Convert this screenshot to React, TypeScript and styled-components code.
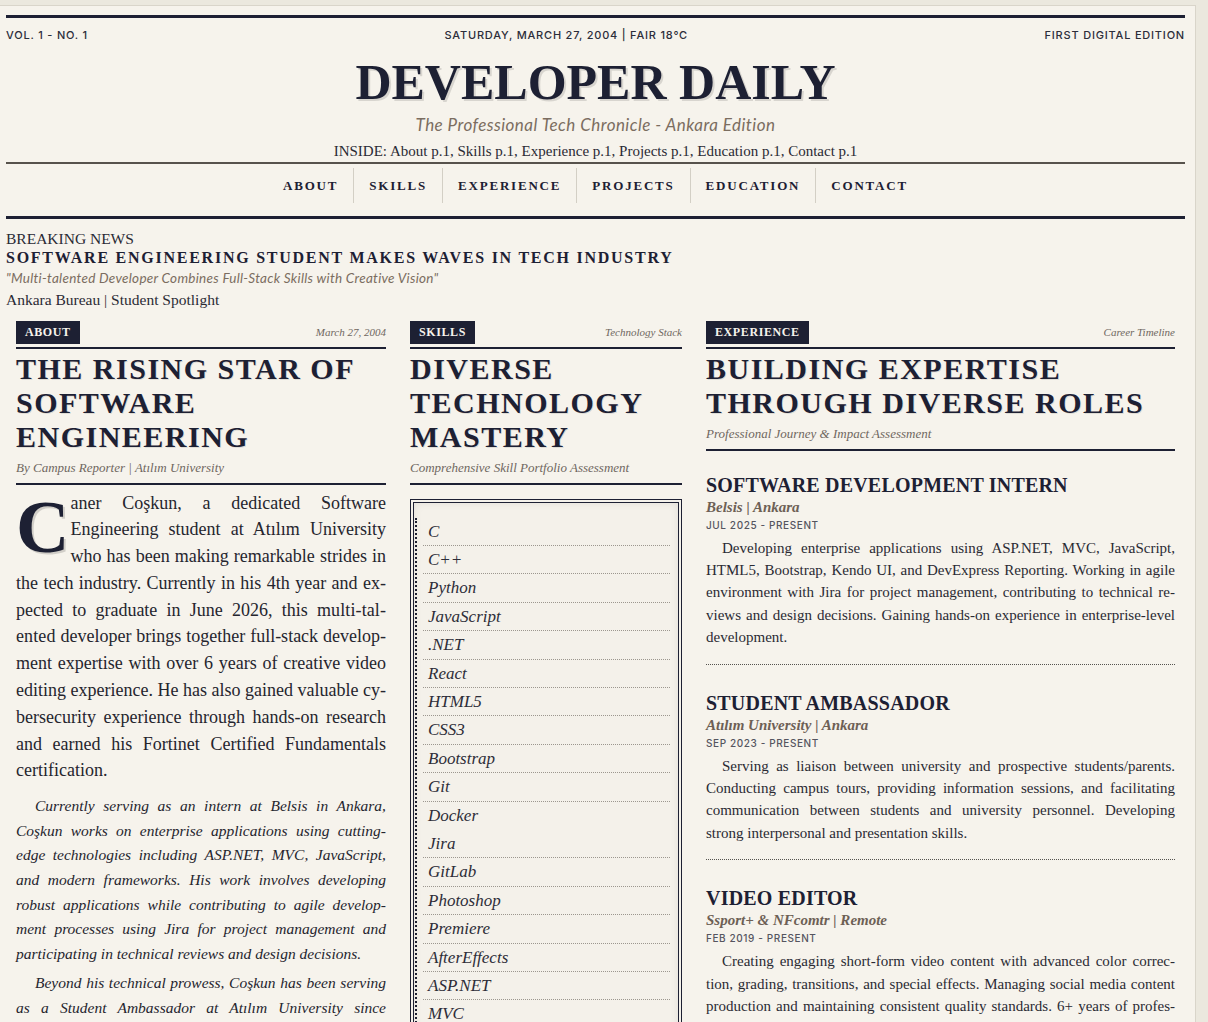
import React from 'react';
import styled, {createGlobalStyle} from 'styled-components';

const NAVY = '#1d2033';
const INK = '#2a2a34';
const MUTED = '#6f675f';
const BROWN = '#7b6d60';
const PAPER = '#f6f3ec';
const SERIF = `'Liberation Serif', 'Times New Roman', serif`;
const SANS = `Inter, 'Liberation Sans', sans-serif`;
const HUMAN = `Lato, 'Open Sans', sans-serif`;

const navItems = ['About', 'Skills', 'Experience', 'Projects', 'Education', 'Contact'];

const skills = [
  'C', 'C++', 'Python', 'JavaScript', '.NET', 'React', 'HTML5', 'CSS3', 'Bootstrap',
  'Git', 'Docker', 'Jira', 'GitLab', 'Photoshop', 'Premiere', 'AfterEffects', 'ASP.NET',
  'MVC', 'Kendo UI', 'DevExpress',
];

const jobs = [
  {
    title: 'Software Development Intern',
    place: 'Belsis | Ankara',
    dates: 'Jul 2025 - Present',
    text: 'Developing enterprise applications using ASP.NET, MVC, JavaScript, HTML5, Bootstrap, Kendo UI, and DevExpress Reporting. Working in agile environment with Jira for project management, contributing to technical re\u00ADviews and design decisions. Gaining hands-on experience in enterprise-level development.',
  },
  {
    title: 'Student Ambassador',
    place: 'Atılım University | Ankara',
    dates: 'Sep 2023 - Present',
    text: 'Serving as liaison between university and prospective students/parents. Conducting campus tours, providing information sessions, and facilitating communication between students and university personnel. Developing strong interpersonal and presentation skills.',
  },
  {
    title: 'Video Editor',
    place: 'Ssport+ & NFcomtr | Remote',
    dates: 'Feb 2019 - Present',
    text: 'Creating engaging short-form video content with advanced color correc\u00ADtion, grading, transitions, and special effects. Managing social media content production and maintaining consistent quality standards. 6+ years of profes\u00ADsional content creation experience.',
  },
];

const GlobalStyle = createGlobalStyle`
  html, body {
    margin: 0;
    background: #ebe8de;
  }
  body {
    font-family: ${SERIF};
    color: ${INK};
  }
`;

const Paper = styled.div`
  box-sizing: border-box;
  width: 1196px;
  min-height: 1100px;
  margin-top: 5px;
  padding: 9px 10px 40px 6px;
  background: ${PAPER};
  border-top: 1px solid #d9d5ca;
  border-right: 1px solid #d9d5ca;
`;

const Masthead = styled.header`
  border-top: 3px solid ${NAVY};
`;

const MetaRow = styled.div`
  display: flex;
  justify-content: space-between;
  margin-top: 9px;
  font-family: ${SANS};
  font-size: 11px;
  font-weight: 500;
  line-height: 16px;
  letter-spacing: 0.8px;
  color: #2c2d3a;
`;

const Title = styled.h1`
  margin: 12px 0 0;
  font-family: ${SERIF};
  font-size: 50px;
  font-weight: 700;
  line-height: 55px;
  text-align: center;
  color: ${NAVY};
  text-shadow: 2px 2px 0 rgba(0, 0, 0, 0.12);
`;

const Tagline = styled.div`
  margin-top: 5px;
  font-family: ${HUMAN};
  font-style: italic;
  font-size: 17px;
  line-height: 20px;
  letter-spacing: 0.45px;
  text-align: center;
  color: ${BROWN};
`;

const Inside = styled.div`
  margin-top: 6px;
  font-size: 15px;
  line-height: 20px;
  text-align: center;
  color: ${INK};
`;

const Nav = styled.nav`
  display: flex;
  justify-content: center;
  margin-top: 1px;
  padding: 4px 0 13px;
  border-top: 2px solid #57524c;
  border-bottom: 3px solid ${NAVY};
`;

const NavLink = styled.a`
  padding: 0 15px;
  font-size: 13px;
  font-weight: 700;
  line-height: 35px;
  letter-spacing: 1.8px;
  text-transform: uppercase;
  color: ${NAVY};
  text-decoration: none;
  & + & {
    border-left: 1px solid #d3cfc5;
  }
`;

const Breaking = styled.section`
  margin-top: 10px;
`;

const Kicker = styled.div`
  font-size: 15.5px;
  line-height: 19px;
  text-transform: uppercase;
`;

const Banner = styled.h2`
  margin: 0;
  font-size: 16px;
  font-weight: 700;
  line-height: 19px;
  letter-spacing: 1.75px;
  color: ${NAVY};
`;

const Quote = styled.div`
  margin-top: 1.5px;
  font-family: ${HUMAN};
  font-style: italic;
  font-size: 13.5px;
  line-height: 18px;
  letter-spacing: 0.28px;
  color: ${BROWN};
`;

const Dateline = styled.div`
  margin-top: 3px;
  font-size: 15.5px;
  line-height: 19px;
`;

const Columns = styled.main`
  display: grid;
  grid-template-columns: 370px 272px 469px;
  column-gap: 24px;
  align-items: start;
  margin-top: 12px;
  padding-left: 10px;
`;

const Column = styled.article``;

const SectionHead = styled.div`
  display: flex;
  justify-content: space-between;
  align-items: center;
  padding-bottom: 3px;
  border-bottom: 2px solid ${NAVY};
`;

const Label = styled.span`
  padding: 0 9px;
  background: ${NAVY};
  color: ${PAPER};
  font-size: 12px;
  font-weight: 700;
  line-height: 23px;
  letter-spacing: 0.6px;
`;

const Aside = styled.span`
  font-style: italic;
  font-size: 11px;
  color: ${MUTED};
`;

const Headline = styled.h2`
  margin: 3px 0 0;
  font-size: 30px;
  font-weight: 700;
  line-height: 34px;
  letter-spacing: 1.5px;
  color: ${NAVY};
  text-shadow: 1px 1px 0 rgba(0, 0, 0, 0.1);
`;

const Deck = styled.div`
  margin-top: 5px;
  padding-bottom: 6px;
  border-bottom: 2px solid ${NAVY};
  font-style: italic;
  font-size: 13px;
  line-height: 18px;
  color: ${MUTED};
`;

const Lead = styled.p`
  margin: 5px 0 10px;
  font-size: 18px;
  line-height: 26.8px;
  text-align: justify;
  color: #25252e;
`;

const Tracked = styled.span`
  letter-spacing: 0.12px;
`;

const DropCap = styled.span`
  float: left;
  padding-top: 9px;
  margin-right: 1px;
  font-size: 74px;
  font-weight: 700;
  line-height: 56px;
  color: ${NAVY};
  text-shadow: 2px 2px 0 rgba(0, 0, 0, 0.15);
`;

const Italic = styled.p`
  margin: 0 0 5px;
  font-style: italic;
  font-size: 15.5px;
  line-height: 24.6px;
  text-indent: 19px;
  text-align: justify;
  color: #25252e;
`;

const SkillBox = styled.div`
  margin-top: 14px;
  padding: 15px 0 12px;
  border: 4px double ${NAVY};
  background: #f4f1ea;
  box-shadow: inset 0 0 9px rgba(0, 0, 0, 0.08);
`;

const SkillList = styled.ul`
  margin: 0 0 0 1px;
  padding: 0 8px 0 0;
  list-style: none;
  border-left: 2px dotted ${NAVY};
`;

const Skill = styled.li<{$plain?: boolean}>`
  margin-left: 6px;
  padding-left: 5px;
  font-style: italic;
  font-size: 17px;
  line-height: 27.4px;
  color: #2d2d38;
  border-bottom: ${(p) => (p.$plain ? '1px solid transparent' : '1px dotted #9c978f')};
`;

const Jobs = styled.div`
  padding-top: 22px;
`;

const Job = styled.div`
  padding-bottom: 15px;
  border-bottom: 1px dotted #55534f;
  & + & {
    margin-top: 26px;
  }
`;

const JobTitle = styled.h3`
  margin: 0;
  font-size: 20px;
  font-weight: 700;
  line-height: 24px;
  letter-spacing: 0.2px;
  text-transform: uppercase;
  color: ${NAVY};
`;

const Place = styled.div`
  font-style: italic;
  font-weight: 700;
  font-size: 15px;
  line-height: 21px;
  color: #6d6055;
`;

const Dates = styled.div`
  font-family: ${SANS};
  font-size: 10px;
  font-weight: 500;
  line-height: 14px;
  letter-spacing: 0.6px;
  text-transform: uppercase;
  color: #55555f;
`;

const JobText = styled.p`
  margin: 5px 0 0;
  font-size: 15px;
  line-height: 22.4px;
  text-indent: 16px;
  text-align: justify;
  color: #2a2a33;
`;

export default function App() {
  return (
    <>
      <GlobalStyle />
      <Paper>
        <Masthead>
          <MetaRow>
            <span>VOL. 1 - NO. 1</span>
            <span>SATURDAY, MARCH 27, 2004 | FAIR 18°C</span>
            <span>FIRST DIGITAL EDITION</span>
          </MetaRow>
          <Title>DEVELOPER DAILY</Title>
          <Tagline>The Professional Tech Chronicle - Ankara Edition</Tagline>
          <Inside>
            INSIDE: About p.1, Skills p.1, Experience p.1, Projects p.1, Education p.1, Contact p.1
          </Inside>
          <Nav>
            {navItems.map((item) => (
              <NavLink key={item} href={`#${item.toLowerCase()}`}>
                {item}
              </NavLink>
            ))}
          </Nav>
        </Masthead>

        <Breaking>
          <Kicker>Breaking News</Kicker>
          <Banner>SOFTWARE ENGINEERING STUDENT MAKES WAVES IN TECH INDUSTRY</Banner>
          <Quote>"Multi-talented Developer Combines Full-Stack Skills with Creative Vision"</Quote>
          <Dateline>Ankara Bureau | Student Spotlight</Dateline>
        </Breaking>

        <Columns>
          <Column id="about">
            <SectionHead>
              <Label>ABOUT</Label>
              <Aside>March 27, 2004</Aside>
            </SectionHead>
            <Headline>THE RISING STAR OF SOFTWARE ENGINEERING</Headline>
            <Deck>By Campus Reporter | Atılım University</Deck>
            <Lead>
              <DropCap>C</DropCap>
              aner Coşkun, a dedicated Software Engineering student at Atılım University who has been
              making remarkable strides in the tech industry. Currently in his 4th year and ex{'\u00AD'}pected
              to graduate in June 2026, this <Tracked>multi-tal{'\u00AD'}ented</Tracked> developer brings together
              full-stack develop{'\u00AD'}ment expertise with over 6 years of creative video editing experience.
              He has also gained valuable cy{'\u00AD'}bersecurity experience through hands-on research and
              earned his Fortinet Certified Fundamentals certification.
            </Lead>
            <Italic>
              Currently serving as an intern at Belsis in Ankara, Coşkun works on enterprise applications
              using cutting-edge technologies including ASP.NET, MVC, JavaScript, and modern frameworks.
              His work involves developing robust applications while contributing to agile develop{'\u00AD'}ment
              processes using Jira for project management and participating in technical reviews and
              design decisions.
            </Italic>
            <Italic>
              Beyond his technical prowess, Coşkun has been serving as a Student Ambassador at Atılım
              University since September 2023, guiding prospective students and their families.
            </Italic>
          </Column>

          <Column id="skills">
            <SectionHead>
              <Label>SKILLS</Label>
              <Aside>Technology Stack</Aside>
            </SectionHead>
            <Headline>DIVERSE TECHNOLOGY MASTERY</Headline>
            <Deck>Comprehensive Skill Portfolio Assessment</Deck>
            <SkillBox>
              <SkillList>
                {skills.map((s) => (
                  <Skill key={s} $plain={s === 'Docker'}>
                    {s}
                  </Skill>
                ))}
              </SkillList>
            </SkillBox>
          </Column>

          <Column id="experience">
            <SectionHead>
              <Label>EXPERIENCE</Label>
              <Aside>Career Timeline</Aside>
            </SectionHead>
            <Headline>BUILDING EXPERTISE THROUGH DIVERSE ROLES</Headline>
            <Deck>Professional Journey &amp; Impact Assessment</Deck>
            <Jobs>
              {jobs.map((job) => (
                <Job key={job.title}>
                  <JobTitle>{job.title}</JobTitle>
                  <Place>{job.place}</Place>
                  <Dates>{job.dates}</Dates>
                  <JobText>{job.text}</JobText>
                </Job>
              ))}
            </Jobs>
          </Column>
        </Columns>
      </Paper>
    </>
  );
}
